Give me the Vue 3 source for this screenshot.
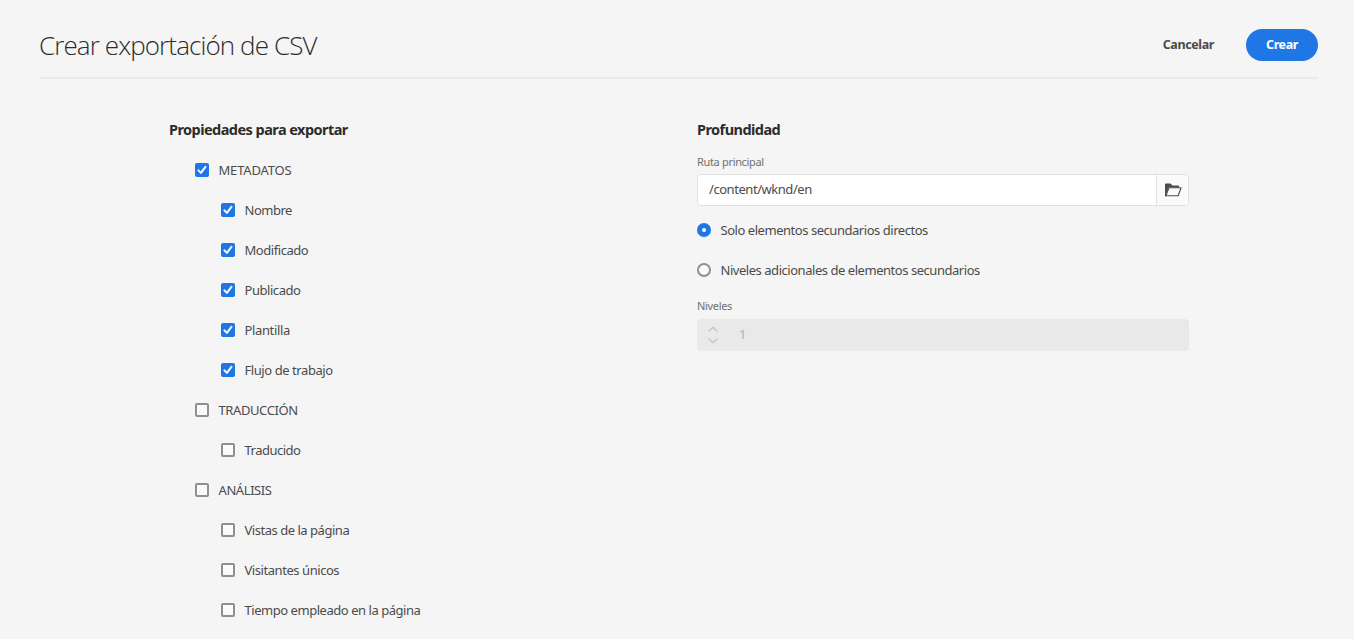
<script setup>
import { ref } from 'vue'

const groups = ref([
  {
    label: 'METADATOS', checked: true, gap: -0.18,
    items: [
      { label: 'Nombre', checked: true, gap: -0.48 },
      { label: 'Modificado', checked: true, gap: -0.45 },
      { label: 'Publicado', checked: true, gap: -0.45 },
      { label: 'Plantilla', checked: true, gap: -0.36 },
      { label: 'Flujo de trabajo', checked: true, gap: -0.43 }
    ]
  },
  {
    label: 'TRADUCCIÓN', checked: false, gap: -0.4,
    items: [{ label: 'Traducido', checked: false, gap: -0.5 }]
  },
  {
    label: 'ANÁLISIS', checked: false, gap: -0.42,
    items: [
      { label: 'Vistas de la página', checked: false, gap: -0.47 },
      { label: 'Visitantes únicos', checked: false, gap: -0.44 },
      { label: 'Tiempo empleado en la página', checked: false, gap: -0.46 }
    ]
  }
])

const depth = ref('direct')
const depths = [
  { value: 'direct', label: 'Solo elementos secundarios directos', gap: -0.46 },
  { value: 'more', label: 'Niveles adicionales de elementos secundarios', gap: -0.46 }
]
const tracking = (o) => ({ letterSpacing: o.gap + 'px' })
</script>

<template>
  <div class="page">
    <header class="header">
      <h1>Crear exportación de CSV</h1>
      <button class="cancel">Cancelar</button>
      <button class="create">Crear</button>
    </header>

    <main class="columns">
      <section class="properties">
        <h2>Propiedades para exportar</h2>
        <div v-for="g in groups" :key="g.label" class="group">
          <div class="row" @click="g.checked = !g.checked">
            <span class="box" :class="{ on: g.checked }">
              <svg v-if="g.checked" viewBox="0 0 14 14"><path d="M3.4 7.4 5.9 9.9 10.5 3.9" /></svg>
            </span>
            <span :style="tracking(g)">{{ g.label }}</span>
          </div>
          <div v-for="i in g.items" :key="i.label" class="row child" @click="i.checked = !i.checked">
            <span class="box" :class="{ on: i.checked }">
              <svg v-if="i.checked" viewBox="0 0 14 14"><path d="M3.4 7.4 5.9 9.9 10.5 3.9" /></svg>
            </span>
            <span :style="tracking(i)">{{ i.label }}</span>
          </div>
        </div>
      </section>

      <section class="depth">
        <h2>Profundidad</h2>
        <div class="label">Ruta principal</div>
        <div class="path">
          <div class="value">/content/wknd/en</div>
          <button class="browse">
            <svg viewBox="0 0 18 14">
              <path class="back" d="M1 13.2V1.4Q1 .6 1.8.6H6.6L8.4 2.4H14.2Q15 2.4 15 3.2V5H13.8V4.4H4.6L2 11.6V13.2Z" />
              <path class="front" d="M5 4.7H17L14.2 12.7H1.9Z" />
            </svg>
          </button>
        </div>
        <div v-for="d in depths" :key="d.value" class="row radio-row" @click="depth = d.value">
          <span class="radio" :class="{ on: depth === d.value }"></span>
          <span :style="tracking(d)">{{ d.label }}</span>
        </div>
        <div class="label levels">Niveles</div>
        <div class="stepper">
          <svg viewBox="0 0 10 18">
            <path d="M1.2 5 5 1.3 8.8 5M1.2 13 5 16.7 8.8 13" />
          </svg>
          <span>1</span>
        </div>
      </section>
    </main>
  </div>
</template>

<style>
body { background: #f5f5f5; overflow: hidden; }
</style>

<style scoped>
.page {
  height: 639px;
  overflow: hidden;
  background: #f5f5f5;
  color: #4b4b4b;
  font: 13px/20px "Noto Sans", "Open Sans", sans-serif;
}
.header {
  display: flex;
  align-items: center;
  box-sizing: border-box;
  height: 79px;
  margin: 0 36px 0 39px;
  padding-top: 13px;
  border-bottom: 2px solid #eaeaea;
}
h1 {
  flex: 1;
  margin: 0;
  color: #2c2c2c;
  font: 300 26px/34px "Open Sans", "Noto Sans", sans-serif;
  letter-spacing: -0.9px;
}
button {
  padding: 0;
  border: 0;
  background: none;
  font: 700 12.5px/20px "Noto Sans", sans-serif;
  color: #4b4b4b;
}
.cancel { margin-right: 32px; letter-spacing: -0.38px; }
.create {
  width: 72px;
  height: 32px;
  border-radius: 16px;
  background: #1f77e5;
  color: #fff;
  letter-spacing: -0.4px;
}
.columns {
  display: grid;
  grid-template-columns: 492px 492px;
  column-gap: 36px;
  padding: 39px 0 0 169px;
}
h2 {
  margin: 0;
  color: #2c2c2c;
  font: 700 14.5px/22px "Noto Sans", sans-serif;
  letter-spacing: -0.55px;
}
.properties h2 { margin-bottom: 10px; }
.row {
  display: flex;
  align-items: center;
  gap: 9.5px;
  height: 40px;
  padding-left: 26px;
  white-space: nowrap;
}
.row.child { padding-left: 52px; }
.box {
  display: flex;
  box-sizing: border-box;
  width: 14px;
  height: 14px;
  border: 2px solid #909090;
  border-radius: 2px;
  background: #fafafa;
}
.box.on { border: 0; background: #1f77e5; }
.box svg { width: 14px; height: 14px; }
.box path { fill: none; stroke: #fff; stroke-width: 2; stroke-linecap: round; stroke-linejoin: round; }
.label {
  margin-top: 12px;
  height: 20px;
  color: #707070;
  font-size: 11px;
  letter-spacing: -0.33px;
}
.path {
  display: flex;
  box-sizing: border-box;
  height: 32px;
  margin: 2px 0 4px;
  border: 1px solid #e1e1e1;
  border-radius: 4px;
  background: #fff;
  overflow: hidden;
}
.value { flex: 1; padding: 4px 0 0 11px; letter-spacing: -0.45px; }
.browse {
  display: flex;
  align-items: center;
  justify-content: center;
  width: 32px;
  border-left: 1px solid #e1e1e1;
  background: #fafafa;
}
.browse svg { width: 18px; height: 14px; }
.back { fill: #4b4b4b; }
.front { fill: #fafafa; stroke: #4b4b4b; stroke-width: 1.1; stroke-linejoin: round; }
.radio-row { padding-left: 0; }
.radio {
  box-sizing: border-box;
  width: 14px;
  height: 14px;
  border: 2px solid #909090;
  border-radius: 50%;
  background: #fafafa;
}
.radio.on { border: 5px solid #1f77e5; background: #fff; }
.levels { margin-top: 6px; }
.stepper {
  display: flex;
  align-items: center;
  gap: 21px;
  box-sizing: border-box;
  height: 32px;
  margin-top: 3px;
  padding-left: 11px;
  border-radius: 4px;
  background: #e9e9e9;
  color: #b3b3b3;
}
.stepper span { padding-bottom: 2px; }
.stepper svg { width: 10px; height: 18px; }
.stepper path { fill: none; stroke: #c8c8c8; stroke-width: 1.6; stroke-linecap: round; stroke-linejoin: round; }
</style>
